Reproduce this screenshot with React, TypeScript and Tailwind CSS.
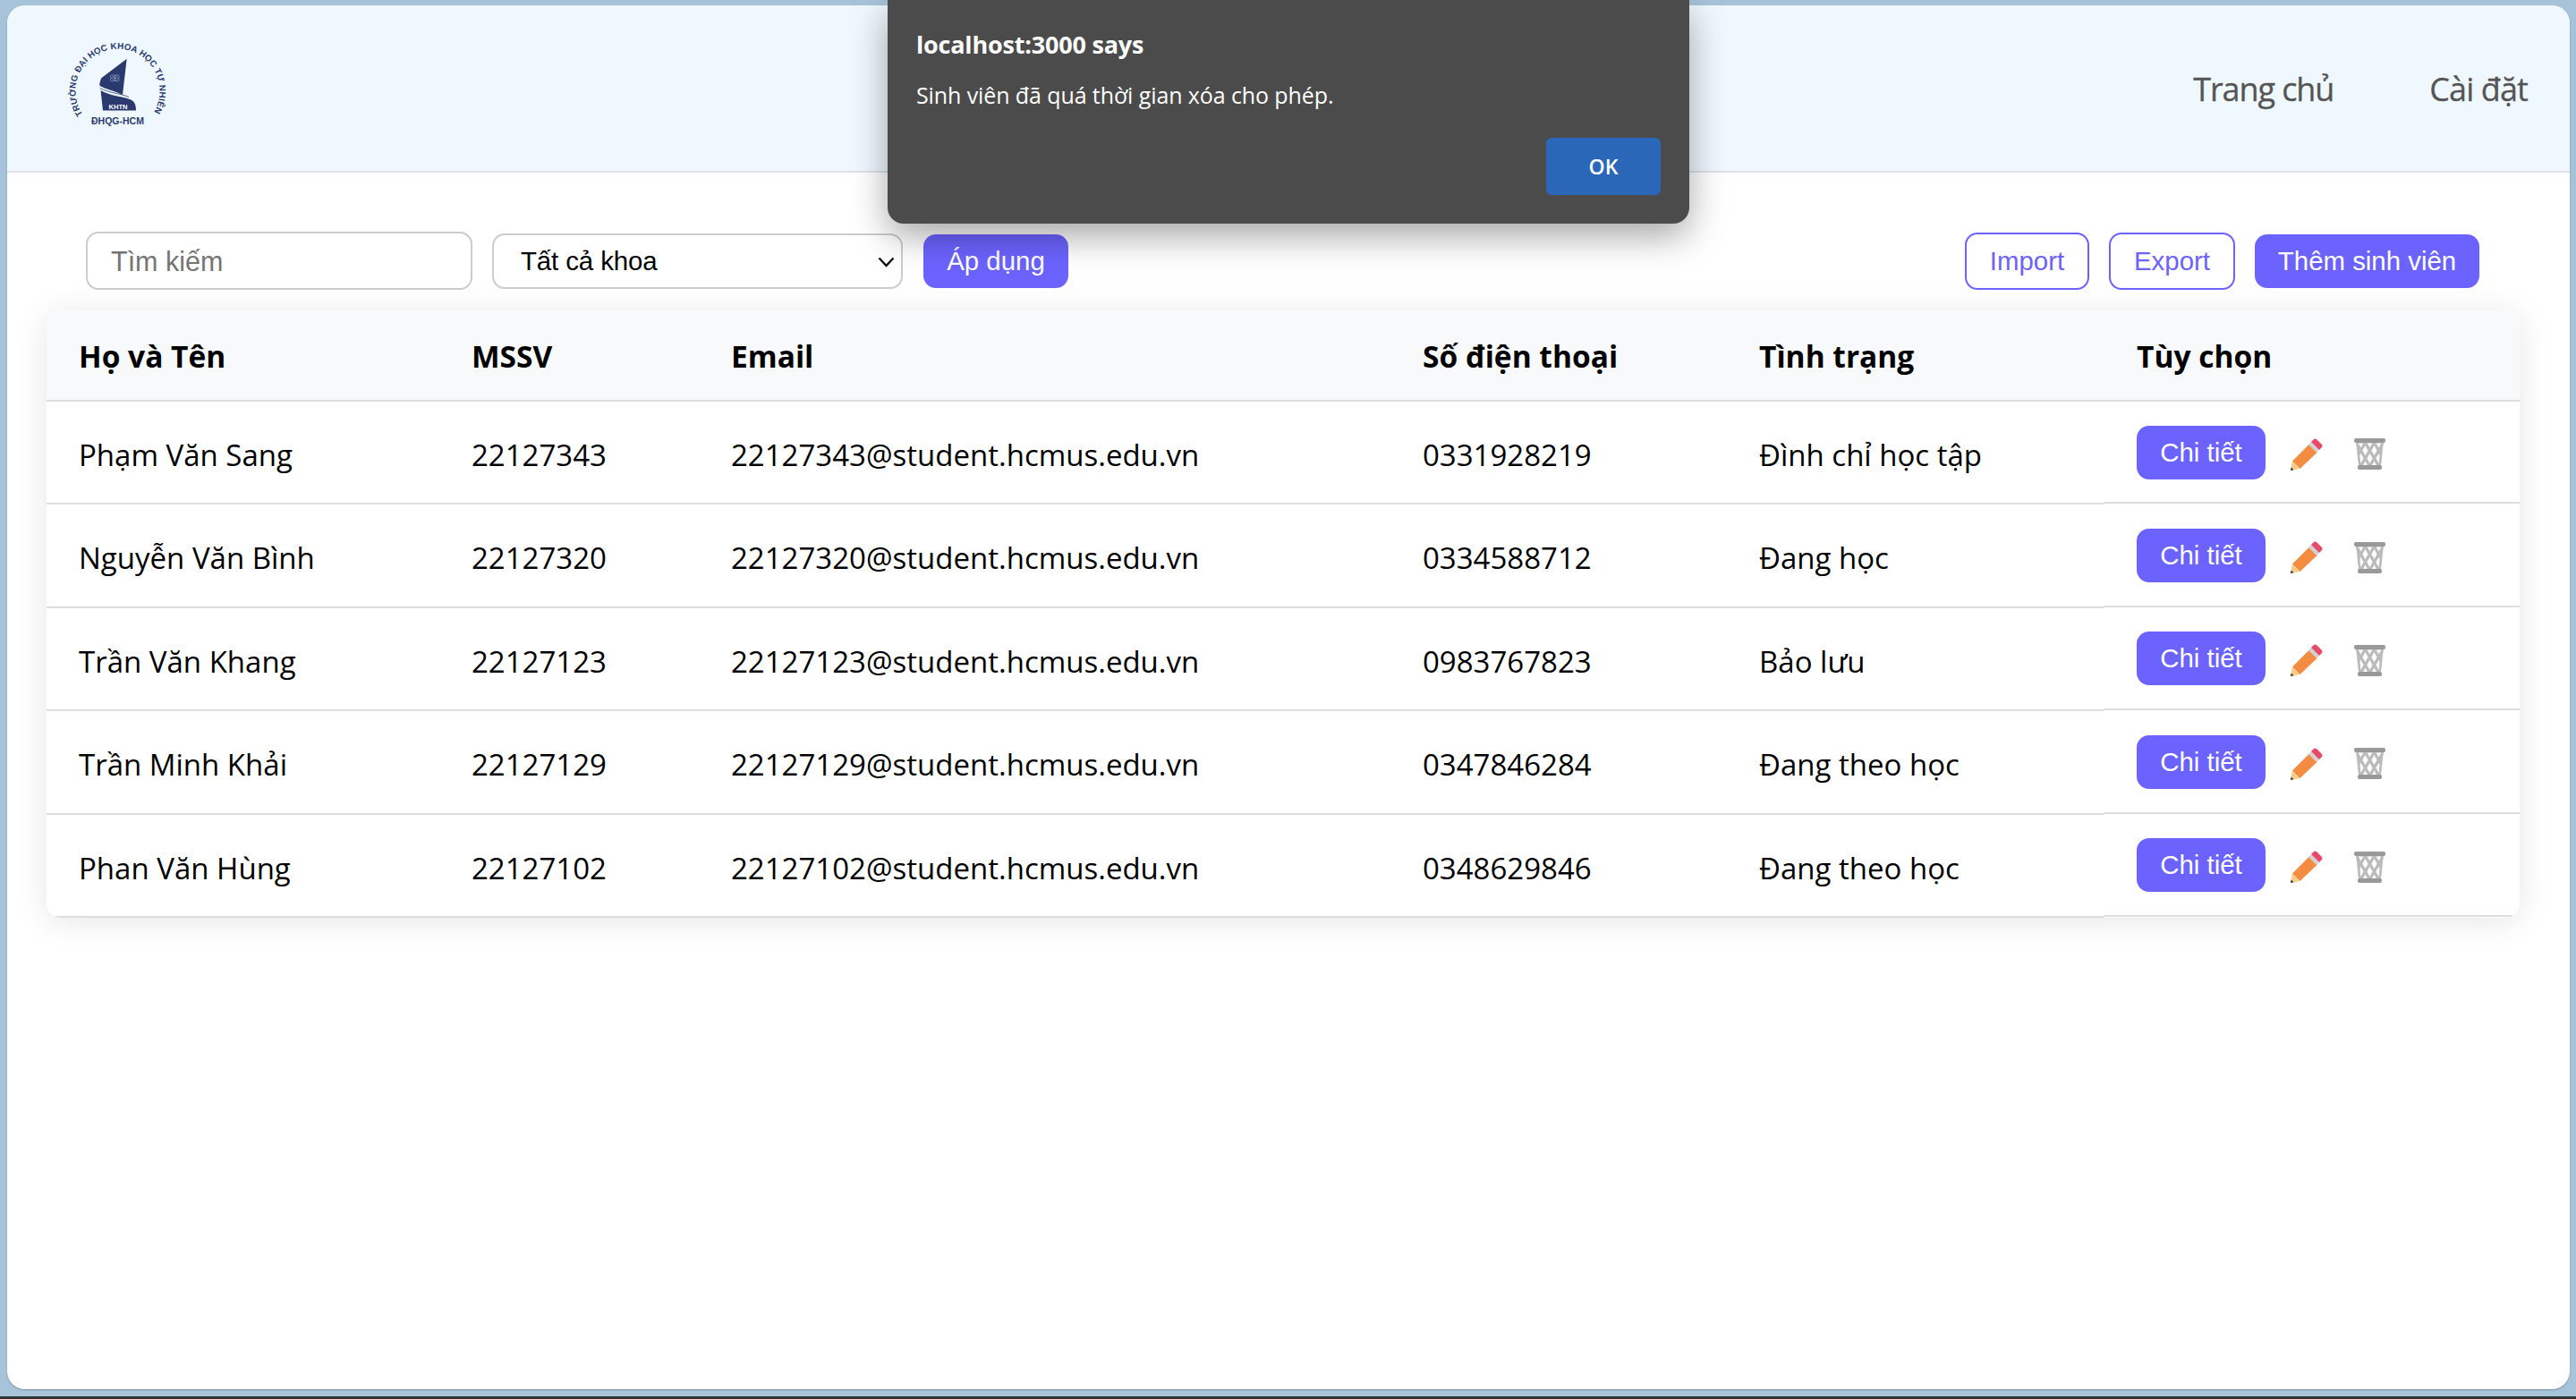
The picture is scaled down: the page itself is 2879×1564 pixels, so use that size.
import React from 'react';

const students = [
  { name: 'Phạm Văn Sang', id: '22127343', phone: '0331928219', status: 'Đình chỉ học tập' },
  { name: 'Nguyễn Văn Bình', id: '22127320', phone: '0334588712', status: 'Đang học' },
  { name: 'Trần Văn Khang', id: '22127123', phone: '0983767823', status: 'Bảo lưu' },
  { name: 'Trần Minh Khải', id: '22127129', phone: '0347846284', status: 'Đang theo học' },
  { name: 'Phan Văn Hùng', id: '22127102', phone: '0348629846', status: 'Đang theo học' },
];

const headers = ['Họ và Tên', 'MSSV', 'Email', 'Số điện thoại', 'Tình trạng', 'Tùy chọn'];

const Logo = () => (
  <svg width="120" height="100" viewBox="0 0 120 100" className="block mb-[9px]">
    <defs>
      <path id="logo-arc" d="M 20.500 84 A 47 47 0 1 1 99 83" fill="none" />
    </defs>
    <text fill="#2b3a6e" fontSize="9.800" fontWeight="700" fontFamily="'Liberation Sans', sans-serif">
      <textPath href="#logo-arc" textLength="200" lengthAdjust="spacing">TRƯỜNG ĐẠI HỌC KHOA HỌC TỰ NHIÊN</textPath>
    </text>
    <path d="M69.700 21.700 L41.300 43.300 C39.500 47 39 50 39.500 52 C47 56 57 58 65 62 Z" fill="#2b3a6e" />
    <path d="M40.500 57 L43 79.500 H80 C80 72 78 69 73 67 C64 63.500 50 63 40.500 57 Z" fill="#2b3a6e" />
    <path d="M39.700 54.500 C50 60 63 60.500 72 64.500" fill="none" stroke="#2b3a6e" strokeWidth="0.8" />
    <ellipse cx="56.300" cy="43.300" rx="5.500" ry="2.500" fill="none" stroke="#8f9cc4" strokeWidth="0.7" transform="rotate(30 56.300 43.300)" />
    <ellipse cx="56.300" cy="43.300" rx="5.500" ry="2.500" fill="none" stroke="#8f9cc4" strokeWidth="0.7" transform="rotate(-30 56.300 43.300)" />
    <circle cx="56.300" cy="43.300" r="1.300" fill="#8f9cc4" />
    <text x="60" y="77.500" textAnchor="middle" fill="#fff" fontSize="7.600" fontWeight="700" fontFamily="'Liberation Sans', sans-serif">KHTN</text>
    <text x="59.500" y="95" textAnchor="middle" fill="#2b3a6e" fontSize="10.500" fontWeight="700" fontFamily="'Liberation Sans', sans-serif">ĐHQG-HCM</text>
  </svg>
);

const PencilIcon = () => (
  <svg width="36" height="36" viewBox="0 0 36 36" className="block">
    <path d="M2 25.500 L21 6.500 L30 15.500 L10.500 34 Z" fill="#f38b41" />
    <path d="M20 7 L23 4 L32 13 L29 16 Z" fill="#d2d2d2" />
    <path d="M23 4 L26 1 Q27.500 0 29 1 L35 7 Q36 8.500 35 10 L32 13 Z" fill="#e84a6a" />
    <path d="M2 25.500 L10.500 34 L0 36 Z" fill="#f7cd85" />
    <path d="M0.700 32.500 L3.500 35.300 L0 36 Z" fill="#333" />
  </svg>
);

const TrashIcon = () => (
  <svg width="35" height="35" viewBox="0 0 35 35" className="block">
    <defs>
      <clipPath id="bin-body">
        <path d="M2 3 H33 L29.500 33 H5.500 Z" />
      </clipPath>
    </defs>
    <path d="M2 3 H33 L29.500 33 H5.500 Z" fill="#fff" />
    <g clipPath="url(#bin-body)" stroke="#bbbbbb" strokeWidth="3.300" fill="none">
      <path d="M-8 4 L8 32 M2 4 L18 32 M12 4 L28 32 M22 4 L38 32" />
      <path d="M43 4 L27 32 M33 4 L17 32 M23 4 L7 32 M13 4 L-3 32" />
      <path d="M2 3 H33 L29.500 33 H5.500 Z" strokeWidth="5" />
    </g>
    <rect x="0" y="0" width="35" height="5" rx="2" fill="#999999" />
    <rect x="4" y="30" width="27" height="5" rx="2" fill="#999999" />
  </svg>
);

const App = () => {
  return (
    <div className="relative h-[1564px] w-full overflow-hidden bg-[#a7c3d9] flex flex-col font-['Open_Sans',sans-serif]">
      <div className="mt-[6px] ml-[8px] mr-[7px] h-[1547px] shrink-0 rounded-[20px] overflow-hidden bg-white flex flex-col shadow-[0_1px_2px_rgba(0,0,0,0.25)]">
        <header className="h-[187px] shrink-0 bg-[#f0f8ff] border-b-2 border-[#dee2e6] flex items-center justify-between pl-[64px] pr-[47px]">
          <Logo />
          <nav className="flex items-center gap-[107px] pt-[2px] text-[#555] text-[36px] [-webkit-text-stroke:0.3px_#555]">
            <span className="tracking-[-1.1px]">Trang chủ</span>
            <span className="tracking-[-0.9px]">Cài đặt</span>
          </nav>
        </header>

        <div className="mt-[66px] ml-[88px] mr-[101px] h-[65px] flex items-center justify-between font-['Liberation_Sans',sans-serif] text-[29.4px]">
          <div className="flex items-center">
            <input
              placeholder="Tìm kiếm"
              className="w-[432px] h-[65px] rounded-[14px] border-2 border-[#ccc] px-[26px] pt-[1px] bg-white outline-none text-[30.5px] placeholder:text-[#757575]"
            />
            <div className="relative ml-[22px]">
              <select className="block w-[459px] h-[62px] rounded-[14px] border-2 border-[#ccc] pl-[30px] pr-[8px] pt-[2px] bg-white text-black appearance-none tracking-[-0.1px]">
                <option>Tất cả khoa</option>
              </select>
              <svg width="19" height="12" viewBox="0 0 19 12" className="absolute top-[26px] right-[9px] pointer-events-none">
                <path d="M1.500 1.500 L9.500 10 L17.500 1.500" fill="none" stroke="#111" strokeWidth="2.400" />
              </svg>
            </div>
            <button className="ml-[23px] w-[162px] h-[60px] pt-[2px] rounded-[14px] bg-[#6c63ff] text-white">Áp dụng</button>
          </div>
          <div className="flex items-center">
            <button className="w-[139px] h-[64px] pt-[2px] rounded-[14px] border-2 border-[#6c63ff] text-[#6c63ff] bg-white">Import</button>
            <button className="ml-[22px] w-[141px] h-[64px] pt-[2px] rounded-[14px] border-2 border-[#6c63ff] text-[#6c63ff] bg-white">Export</button>
            <button className="ml-[22px] w-[251px] h-[60px] pt-[2px] rounded-[14px] bg-[#6c63ff] text-white">Thêm sinh viên</button>
          </div>
        </div>

        <div className="mt-[23px] ml-[44px] mr-[56px] rounded-[16px] shadow-[0_4px_36px_rgba(0,0,0,0.1)] overflow-hidden">
          <table className="w-full table-fixed border-separate border-spacing-0 text-black text-[33px]">
            <colgroup>
              <col className="w-[439px]" />
              <col className="w-[290px]" />
              <col className="w-[773px]" />
              <col className="w-[376px]" />
              <col className="w-[422px]" />
              <col />
            </colgroup>
            <thead>
              <tr className="h-[102px] bg-[#f8f9fa]">
                {headers.map((h) => (
                  <th key={h} className="text-left font-bold pl-[36px] pt-[3px] text-[33.5px] border-b-2 border-[#ddd]">{h}</th>
                ))}
              </tr>
            </thead>
            <tbody>
              {students.map((s) => (
                <tr key={s.id} className="h-[115.4px]">
                  <td className="pl-[36px] pt-[6px] border-b-2 border-[#ddd]">{s.name}</td>
                  <td className="pl-[36px] pt-[6px] border-b-2 border-[#ddd]">{s.id}</td>
                  <td className="pl-[36px] pt-[6px] border-b-2 border-[#ddd]">{s.id}@student.hcmus.edu.vn</td>
                  <td className="pl-[36px] pt-[6px] border-b-2 border-[#ddd]">{s.phone}</td>
                  <td className="pl-[36px] pt-[6px] border-b-2 border-[#ddd]">{s.status}</td>
                  <td className="pl-[36px] pb-[2px] shadow-[inset_0_-1px_0_0_#fff,inset_0_-3px_0_0_#ddd]">
                    <div className="flex items-center">
                      <button className="w-[144px] h-[60px] rounded-[14px] bg-[#6c63ff] text-white font-['Liberation_Sans',sans-serif] text-[29.4px]">Chi tiết</button>
                      <span className="ml-[28px] mt-[4px]"><PencilIcon /></span>
                      <span className="ml-[35px] mt-[4px]"><TrashIcon /></span>
                    </div>
                  </td>
                </tr>
              ))}
            </tbody>
          </table>
        </div>
      </div>
      <div className="mt-[8px] flex-1 bg-[#2f3437]" />

      {/* the browser's alert sits over the page */}
      <div className="absolute top-0 left-[992px] w-[896px] h-[250px] rounded-b-[18px] bg-[#4b4b4b] text-white px-[32px] shadow-[0_14px_40px_rgba(0,0,0,0.35)] flex flex-col">
        <div className="mt-[34px] text-[27px] leading-[32px] font-bold tracking-[-0.2px]">localhost:3000 says</div>
        <div className="mt-[24px] text-[25px] leading-[32px] tracking-[-0.1px]">Sinh viên đã quá thời gian xóa cho phép.</div>
        <div className="absolute top-[154px] right-[32px] w-[128px] h-[64px] rounded-[6px] bg-[#2b67b8] flex items-center justify-center text-[23px] font-semibold">OK</div>
      </div>
    </div>
  );
};

export default App;
